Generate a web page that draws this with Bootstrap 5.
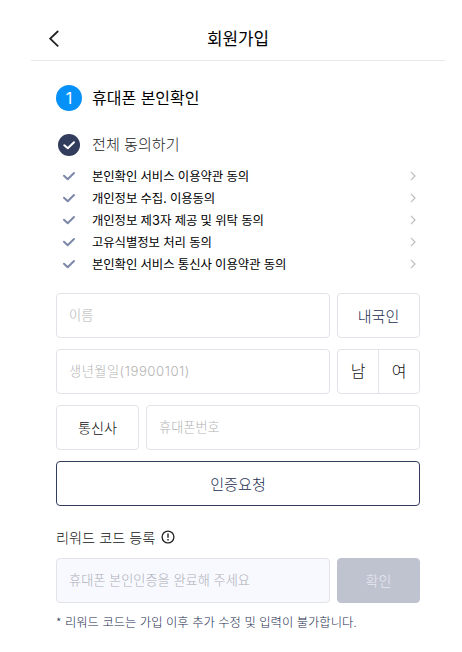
<!DOCTYPE html>
<html lang="ko">
<head>
<meta charset="utf-8">
<meta name="viewport" content="width=device-width, initial-scale=1">
<title>회원가입</title>
<link href="https://cdn.jsdelivr.net/npm/bootstrap@5.3.0/dist/css/bootstrap.min.css" rel="stylesheet">
<style>
  body { font-family: "Noto Sans CJK KR", sans-serif; font-weight: 300; color: #000; background: #fff; line-height: 22px; overflow: hidden; }
  svg { display: block; flex: none; }
  .screen { width: 414px; margin-left: 31px; }
  .topbar { height: 61px; padding: 17px 18px 0; border-bottom: 1px solid #e8e8ec; display: grid; grid-template-columns: 12px 1fr 12px; }
  .topbar h1 { font-size: 16.9px; font-weight: 400; line-height: 42px; }
  .back { height: 44px; }
  .content { padding: 24px 25px 0; }
  .step { height: 25px; }
  .step-no { width: 26px; height: 26px; background: #0591f8; font: 400 16px/26px Inter, sans-serif; }
  .step h2 { font-size: 16px; font-weight: 400; line-height: 24px; margin-left: 10px; }
  .agree-all { margin-top: 23px; height: 23px; font-size: 15.1px; line-height: 22px; color: #222; padding-left: 2px; gap: 12px; }
  .agree-all div { height: 25px; }
  .agree { margin-top: 9px; font-size: 12.4px; letter-spacing: -.1px; font-weight: 400; }
  .agree li { height: 22px; padding: 0 4px 0 6px; }
  .agree span { margin-left: 16px; }
  .agree i { font-family: Inter, sans-serif; font-size: 12.8px; letter-spacing: .2px; }
  .fields { gap: 11px; margin-top: 18px; }
  .fields > div, .reward { gap: 7px; }
  .form-control, .side { height: 45px; border: 1px solid #e2e3e9; border-radius: 4px; }
  .form-control { min-width: 0; padding: 0 12px 2px; font-size: 13.2px; font-weight: 300; font-family: Inter, "Noto Sans CJK KR", sans-serif; }
  .form-control.ko { font-family: "Noto Sans CJK KR", sans-serif; }
  .form-control.birth { letter-spacing: .52px; }
  .form-control::placeholder { color: #b4b4b4; }
  .form-control:disabled { background: #f8f9fe; }
  .form-control:disabled::placeholder { color: #adaeb8; }
  .side { width: 83px; flex: none; padding: 0; line-height: 41px; font-size: 15px; font-weight: 300; color: #111; background: #fff; }
  .nation { color: #232d50; }
  .carrier { font-size: 14.2px; }
  .sex button { flex: 1; border: 0; background: none; padding: 0 0 2px; font-size: 16px; font-weight: 300; color: #111; }
  .sex button + button { border-left: 1px solid #e2e3e9; }
  .request { height: 45px; border: 1px solid #323c5d; border-radius: 4px; color: #232d50; font-size: 15.1px; font-weight: 300; padding: 0; line-height: 41px; }
  .reward-title { margin-top: 20px; font-size: 14.2px; color: #111; gap: 6px; }
  .reward { margin-top: 10px; }
  .side.confirm:disabled { background: #bfc3d0; border-color: #bfc3d0; color: #e8eaf2; font-size: 14px; opacity: 1; }
  .notice { margin-top: 8px; font-size: 12.33px; color: #232d50; white-space: nowrap; }
</style>
<script src="https://cdn.jsdelivr.net/npm/bootstrap@5.3.0/dist/js/bootstrap.bundle.min.js"></script>
</head>
<body>
<svg class="d-none">
  <symbol id="tick" viewBox="0 0 14 10"><path d="M2 4.7 5.7 8.2 12 2" fill="none" stroke="#7d88a8" stroke-width="2" stroke-linecap="round" stroke-linejoin="round"/></symbol>
  <symbol id="next" viewBox="0 0 6 10"><path d="M1 .8 5 5 1 9.2" fill="none" stroke="#bdbdbd" stroke-width="1.2"/></symbol>
</svg>
<main class="screen">
  <header class="topbar">
    <a href="#" class="back d-flex align-items-center" aria-label="뒤로"><svg width="12" height="18" viewBox="0 0 12 18"><path d="M9.2 1 1.2 8.7l8 7.7" fill="none" stroke="#222" stroke-width="1.8"/></svg></a>
    <h1 class="m-0 text-center">회원가입</h1>
  </header>
  <div class="content">
    <div class="step d-flex">
      <div class="step-no rounded-circle text-white text-center">1</div>
      <h2 class="mb-0">휴대폰 본인확인</h2>
    </div>
    <div class="agree-all d-flex align-items-center">
      <svg width="22" height="22" viewBox="0 0 22 22"><circle cx="11" cy="11" r="11" fill="#323c5d"/><path d="M6.3 11.2 9.8 14.3 16 8.2" fill="none" stroke="#fff" stroke-width="2" stroke-linecap="round" stroke-linejoin="round"/></svg>
      <div>전체 동의하기</div>
    </div>
    <ul class="agree list-unstyled mb-0">
      <li class="d-flex align-items-center"><svg width="14" height="10"><use href="#tick"/></svg><span>본인확인 서비스 이용약관 동의</span><svg class="ms-auto" width="6" height="10"><use href="#next"/></svg></li>
      <li class="d-flex align-items-center"><svg width="14" height="10"><use href="#tick"/></svg><span>개인정보 수집. 이용동의</span><svg class="ms-auto" width="6" height="10"><use href="#next"/></svg></li>
      <li class="d-flex align-items-center"><svg width="14" height="10"><use href="#tick"/></svg><span>개인정보 제<i class="fst-normal">3</i>자 제공 및 위탁 동의</span><svg class="ms-auto" width="6" height="10"><use href="#next"/></svg></li>
      <li class="d-flex align-items-center"><svg width="14" height="10"><use href="#tick"/></svg><span>고유식별정보 처리 동의</span><svg class="ms-auto" width="6" height="10"><use href="#next"/></svg></li>
      <li class="d-flex align-items-center"><svg width="14" height="10"><use href="#tick"/></svg><span>본인확인 서비스 통신사 이용약관 동의</span><svg class="ms-auto" width="6" height="10"><use href="#next"/></svg></li>
    </ul>
    <form class="fields d-flex flex-column">
      <div class="d-flex"><input class="form-control ko" placeholder="이름"><button type="button" class="btn side nation">내국인</button></div>
      <div class="d-flex"><input class="form-control birth" placeholder="생년월일(19900101)"><div class="side sex d-flex"><button type="button">남</button><button type="button">여</button></div></div>
      <div class="d-flex"><button type="button" class="btn side carrier">통신사</button><input class="form-control ko" placeholder="휴대폰번호"></div>
      <button type="button" class="btn request w-100">인증요청</button>
    </form>
    <div class="reward-title d-flex align-items-center">리워드 코드 등록
      <svg width="14" height="14" viewBox="0 0 14 14"><circle cx="7" cy="7" r="5.9" fill="none" stroke="#222" stroke-width="1.3"/><path d="M7 3.6v4.2M7 9v1.4" stroke="#222" stroke-width="1.4"/></svg>
    </div>
    <div class="reward d-flex"><input class="form-control ko" placeholder="휴대폰 본인인증을 완료해 주세요" disabled><button type="button" class="btn side confirm" disabled>확인</button></div>
    <p class="notice mb-0">* 리워드 코드는 가입 이후 추가 수정 및 입력이 불가합니다.</p>
  </div>
</main>
</body>
</html>
